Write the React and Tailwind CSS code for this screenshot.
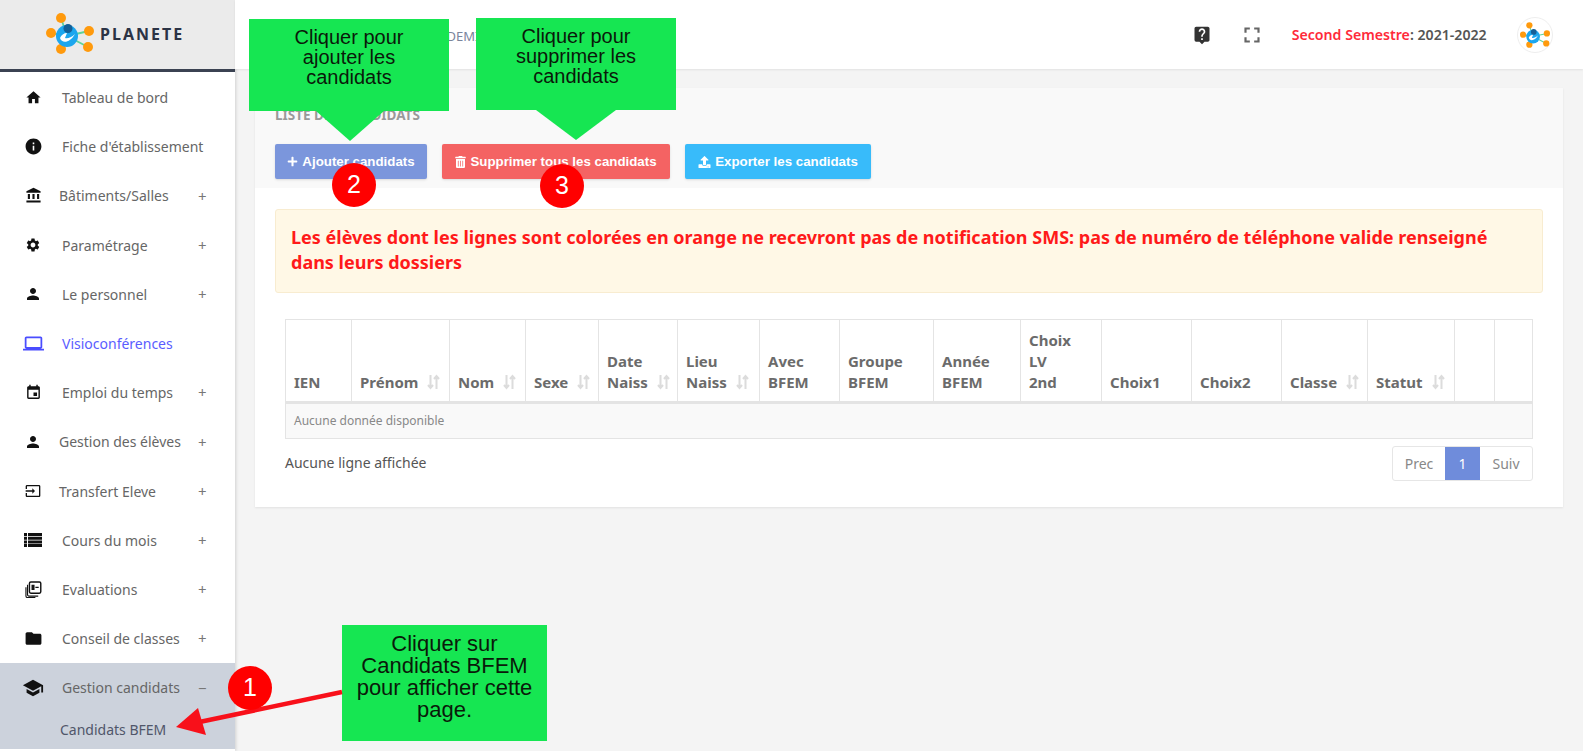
import { MdHome, MdInfo, MdAccountBalance, MdSettings, MdPerson, MdLaptop, MdEvent, MdInput, MdFolder, MdSchool, MdLiveHelp, MdFullscreen } from 'react-icons/md';
import { FaPlus, FaTrashAlt, FaUpload } from 'react-icons/fa';

function ListIcon({ className }) {
  return (
    <svg viewBox="0 0 18 14" className={className} fill="currentColor">
      <path d="M0 0h3v3H0zM4 0h14v3H4zM0 3.700h3v3H0zM4 3.700h14v3H4zM0 7.400h3v3H0zM4 7.400h14v3H4zM0 11h3v3H0zM4 11h14v3H4z" />
    </svg>
  );
}

function StackIcon({ className }) {
  return (
    <svg viewBox="0 0 18 18" className={className} fill="none" stroke="currentColor">
      <rect x="4.700" y="1" width="12" height="12" rx="1.500" strokeWidth="1.500" />
      <path d="M2.700 4v10.500a1.500 1.500 0 0 0 1.500 1.500H14M1 6.500V16a1.500 1.500 0 0 0 1.500 1.500H11" strokeWidth="1.200" />
      <path d="M7.500 4.500h2v4.500h-2zM11 6.700h3.500" fill="currentColor" strokeWidth="1.200" />
    </svg>
  );
}

const menu = [
  { label: 'Tableau de bord', Icon: MdHome, size: 'h-[17px] w-[17px]', x: 'pl-[62px]' },
  { label: "Fiche d'établissement", Icon: MdInfo, size: 'h-[19px] w-[19px]', x: 'pl-[62px]' },
  { label: 'Bâtiments/Salles', Icon: MdAccountBalance, size: 'h-[17px] w-[17px]', x: 'pl-[59px]', more: true },
  { label: 'Paramétrage', Icon: MdSettings, size: 'h-[16px] w-[16px]', x: 'pl-[62px]', more: true },
  { label: 'Le personnel', Icon: MdPerson, size: 'h-[18px] w-[18px]', x: 'pl-[62px]', more: true },
  { label: 'Visioconférences', Icon: MdLaptop, size: 'h-[21px] w-[21px]', x: 'pl-[62px]', active: true },
  { label: 'Emploi du temps', Icon: MdEvent, size: 'h-[17px] w-[17px]', x: 'pl-[62px]', more: true },
  { label: 'Gestion des élèves', Icon: MdPerson, size: 'h-[18px] w-[18px]', x: 'pl-[59px]', more: true },
  { label: 'Transfert Eleve', Icon: MdInput, size: 'h-[16px] w-[16px]', x: 'pl-[59px]', more: true },
  { label: 'Cours du mois', Icon: ListIcon, size: 'h-[14px] w-[18px]', x: 'pl-[62px]', more: true },
  { label: 'Evaluations', Icon: StackIcon, size: 'h-[17px] w-[17px]', x: 'pl-[62px]', more: true },
  { label: 'Conseil de classes', Icon: MdFolder, size: 'h-[19px] w-[19px]', x: 'pl-[62px]', more: true },
];

const columns = [
  { w: 'w-[66px]', lines: ['IEN'] },
  { w: 'w-[98px]', lines: ['Prénom'], sort: true },
  { w: 'w-[76px]', lines: ['Nom'], sort: true },
  { w: 'w-[73px]', lines: ['Sexe'], sort: true },
  { w: 'w-[79px]', lines: ['Date', 'Naiss'], sort: true },
  { w: 'w-[82px]', lines: ['Lieu', 'Naiss'], sort: true },
  { w: 'w-[80px]', lines: ['Avec', 'BFEM'] },
  { w: 'w-[94px]', lines: ['Groupe', 'BFEM'] },
  { w: 'w-[87px]', lines: ['Année', 'BFEM'] },
  { w: 'w-[81px]', lines: ['Choix', 'LV', '2nd'] },
  { w: 'w-[90px]', lines: ['Choix1'] },
  { w: 'w-[90px]', lines: ['Choix2'] },
  { w: 'w-[86px]', lines: ['Classe'], sort: true },
  { w: 'w-[87px]', lines: ['Statut'], sort: true },
  { w: 'w-[40px]', lines: [] },
  { w: 'w-[38px]', lines: [] },
];

function Logo({ className }) {
  return (
    <svg viewBox="0 0 48 41" className={className}>
      <g stroke="#5fd39a" strokeWidth="1.800">
        <line x1="21" y1="23" x2="15" y2="5" />
        <line x1="21" y1="23" x2="5" y2="20" />
        <line x1="21" y1="23" x2="43" y2="18" />
        <line x1="21" y1="23" x2="15" y2="36" />
        <line x1="21" y1="23" x2="42" y2="34" />
      </g>
      <g fill="#ff9a0d">
        <circle cx="15" cy="5" r="5" />
        <circle cx="5" cy="20" r="5" />
        <circle cx="43" cy="18" r="5" />
        <circle cx="15" cy="36" r="5" />
        <circle cx="42" cy="34" r="5" />
      </g>
      <circle cx="21" cy="23" r="11" fill="#1ca6ee" />
      <circle cx="22" cy="15.500" r="4.500" fill="#145f97" />
      <path d="M14 25c2 6 10 5 15-4-4 4-8 5-10 4l2-5c-3 0-6 2-7 5z" fill="#fff" />
    </svg>
  );
}

function SortIcon() {
  return (
    <svg viewBox="0 0 14 16" className="ml-[8px] inline-block h-[16px] w-[15px] align-[-2px]" fill="none" stroke="#dcdcdc" strokeWidth="2">
      <path d="M4 1v13M1.500 11l2.500 3 2.500-3" />
      <path d="M10 15V2M7.500 5L10 2l2.500 3" />
    </svg>
  );
}

function Callout({ className, tipClass, points, lines }) {
  return (
    <div className={`absolute ${className}`}>
      <div className="flex h-[92px] w-[200px] flex-col items-center bg-[#16e652] pt-[8px] text-[20px] leading-[20px] text-[#0a1a0a]">
        {lines.map(l => <span key={l}>{l}</span>)}
      </div>
      <svg viewBox="0 0 80 30" className={`absolute top-[92px] h-[30px] w-[80px] ${tipClass}`}>
        <polygon points={points} fill="#16e652" />
      </svg>
    </div>
  );
}

function Badge({ className, n }) {
  return (
    <div className={`absolute flex h-[44px] w-[44px] items-center justify-center rounded-full bg-[#ff0000] text-[25px] text-white ${className}`}>
      {n}
    </div>
  );
}

export default function App() {
  return (
    <div className="relative flex h-[751px] w-full overflow-hidden bg-[#f4f4f4] font-['Noto_Sans','Open_Sans',sans-serif]">
      {/* Sidebar */}
      <aside className="flex h-full w-[235px] shrink-0 flex-col bg-white shadow-[1px_0_3px_rgba(0,0,0,0.15)]">
        <div className="flex h-[72px] shrink-0 items-center gap-[6px] border-b-[3px] border-[#3b4252] bg-[#ebebeb] pb-[2px] pl-[46px]">
          <Logo className="h-[41px] w-[48px]" />
          <span className="text-[16px] font-bold tracking-[2px] text-[#2b3345]">PLANETE</span>
        </div>
        <nav className="flex-1 pt-[1px]">
          {menu.map(({ label, Icon, size, x, more, active }) => (
            <div key={label} className="relative flex h-[49.200px] items-center text-[14px] text-[#666]">
              <div className="absolute left-[24px] flex w-[18px] justify-center">
                <Icon className={`shrink-0 ${size} ${active ? 'text-[#4a4dff]' : 'text-[#111]'}`} />
              </div>
              <span className={`${x} ${active ? 'text-[#5a5dff]' : ''}`}>{label}</span>
              {more && <span className="absolute left-[198px] text-[15px] text-[#777]">+</span>}
            </div>
          ))}
          <div className="h-[86px] bg-[#ccd2dc] text-[14px] text-[#666]">
            <div className="relative flex h-[49px] items-center">
              <MdSchool className="absolute left-[22px] h-[22px] w-[22px] text-[#111]" />
              <span className="pl-[62px]">Gestion candidats</span>
              <span className="absolute left-[198px] text-[15px] text-[#777]">−</span>
            </div>
            <div className="pl-[60px] pt-[8px] text-[14px] leading-[20px] text-[#50566a]">Candidats BFEM</div>
          </div>
        </nav>
      </aside>

      {/* Main */}
      <div className="flex min-w-0 flex-1 flex-col">
        <header className="flex h-[69px] shrink-0 items-center bg-white pl-[187px] shadow-[0_1px_2px_rgba(0,0,0,0.08)]">
          <span className="pt-[4px] text-[13px] text-[#7a859c]">ACADEMIE</span>
          <MdLiveHelp className="ml-[705px] h-[20px] w-[20px] text-[#333]" />
          <MdFullscreen className="ml-[27px] h-[26px] w-[26px] text-[#666]" />
          <span className="ml-[27px] text-[14.150px] font-semibold text-[#555]">
            <span className="text-[#ff2a3a]">Second Semestre</span>: 2021-2022
          </span>
          <div className="ml-[30px] flex h-[36px] w-[36px] items-center justify-center rounded-full border border-[#eee]">
            <Logo className="h-[26px] w-[30px]" />
          </div>
        </header>

        <main className="ml-[20px] mr-[20px] mt-[19px] h-[419px] bg-white shadow-[0_1px_2px_rgba(0,0,0,0.08)]">
          <div className="h-[100px] bg-[#f9f9f9] px-[20px] pt-[18px]">
            <div className="text-[13.500px] font-bold leading-[18px] text-[#999]">LISTE DES CANDIDATS</div>
            <div className="mt-[20px] flex gap-[15px] font-['Liberation_Sans',sans-serif] text-[13.300px] font-bold text-white">
              <button className="flex h-[35px] w-[152px] items-center justify-center gap-[4px] rounded-[2px] bg-[#7b96dc] shadow-sm">
                <FaPlus className="h-[11px] w-[11px]" />Ajouter candidats
              </button>
              <button className="flex h-[35px] w-[228px] items-center justify-center gap-[4px] rounded-[2px] bg-[#f46363] shadow-sm">
                <FaTrashAlt className="h-[12px] w-[11px]" />Supprimer tous les candidats
              </button>
              <button className="flex h-[35px] w-[186px] items-center justify-center gap-[4px] rounded-[2px] bg-[#38bbfa] shadow-sm">
                <FaUpload className="h-[12px] w-[13px]" />Exporter les candidats
              </button>
            </div>
          </div>

          <div className="px-[20px] pt-[21px]">
            <div className="h-[84px] rounded-[3px] border border-[#f8ecd0] bg-[#fff8e6] px-[15px] pt-[15px] text-[18px] font-bold leading-[25px] text-[#ff1a1a]">
              Les élèves dont les lignes sont colorées en orange ne recevront pas de notification SMS: pas de numéro de téléphone valide renseigné dans leurs dossiers
            </div>
          </div>

          <div className="px-[30px] pt-[26px]">
            <table className="w-[1247px] table-fixed border-collapse border border-[#e4e4e4]">
              <thead>
                <tr className="h-[83px] border-b-[3px] border-[#e4e4e4]">
                  {columns.map((c, i) => (
                    <th key={i} className={`${c.w} border-r border-[#e4e4e4] px-[8px] pb-[8px] text-left align-bottom text-[15px] font-bold leading-[21px] text-[#6b6b6b]`}>
                      {c.lines.map((l, j) => (
                        <div key={l} className="whitespace-nowrap">
                          {l}
                          {c.sort && j === c.lines.length - 1 && <SortIcon />}
                        </div>
                      ))}
                    </th>
                  ))}
                </tr>
              </thead>
              <tbody>
                <tr className="h-[36px] bg-[#f9f9f9]">
                  <td colSpan={16} className="px-[8px] text-[12px] text-[#888]">Aucune donnée disponible</td>
                </tr>
              </tbody>
            </table>
            <div className="mt-[7px] flex items-start justify-between">
              <span className="pt-[6px] text-[14px] text-[#555]">Aucune ligne affichée</span>
              <div className="flex h-[35px] overflow-hidden rounded-[3px] border border-[#e6e6e6] text-[14px] text-[#888]">
                <span className="flex w-[52px] items-center justify-center">Prec</span>
                <span className="flex w-[35px] items-center justify-center bg-[#6f8cdb] text-white">1</span>
                <span className="flex w-[52px] items-center justify-center">Suiv</span>
              </div>
            </div>
          </div>
        </main>
      </div>

      {/* Tutorial annotations laid over the page */}
      <div className="font-['Liberation_Sans',sans-serif]">
        <Callout className="left-[249px] top-[19px]" tipClass="left-[61px]" points="6,0 74,0 40,30" lines={['Cliquer pour', 'ajouter les', 'candidats']} />
        <Callout className="left-[476px] top-[18px]" tipClass="left-[60px]" points="0,0 80,0 40,30" lines={['Cliquer pour', 'supprimer les', 'candidats']} />
        <Badge className="left-[332px] top-[163px]" n="2" />
        <Badge className="left-[540px] top-[164px]" n="3" />
        <div className="absolute left-[342px] top-[625px] flex h-[116px] w-[205px] flex-col items-center bg-[#16e652] pt-[8px] text-[22px] leading-[22px] text-[#0a1a0a]">
          <span>Cliquer sur</span>
          <span>Candidats BFEM</span>
          <span>pour afficher cette</span>
          <span>page.</span>
        </div>
        <svg className="absolute left-[170px] top-[685px] h-[55px] w-[175px]" viewBox="170 685 175 55">
          <line x1="342" y1="692" x2="190" y2="724" stroke="#f8101a" strokeWidth="4.500" />
          <polygon points="176,727 198,708 206,735" fill="#f8101a" />
        </svg>
        <Badge className="left-[228px] top-[666px]" n="1" />
      </div>
    </div>
  );
}
